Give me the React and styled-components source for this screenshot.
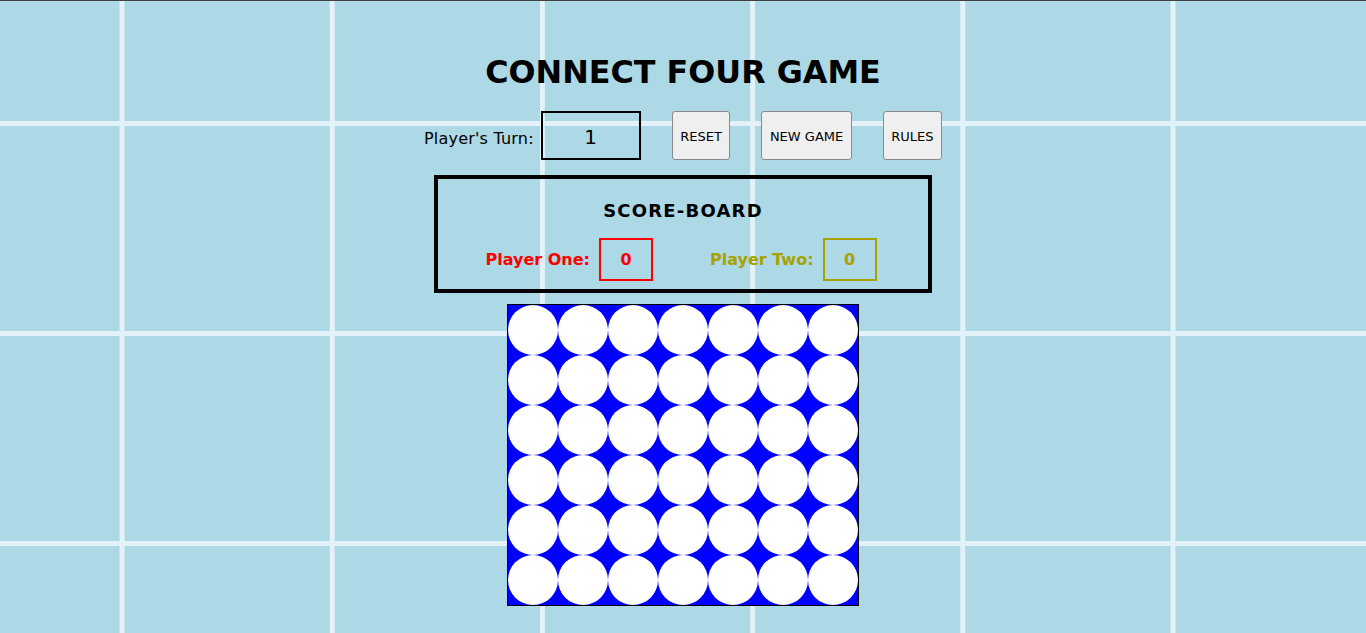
import React, { useState } from "react";
import styled, { createGlobalStyle } from "styled-components";

const GlobalStyle = createGlobalStyle`
  html, body {
    margin: 0;
    padding: 0;
  }
  body {
    font-family: "DejaVu Sans", Verdana, sans-serif;
  }
`;

const Page = styled.div`
  box-sizing: border-box;
  min-height: 100vh;
  border-top: 1px solid #404040;
  background-color: #add8e6;
  background-image: linear-gradient(
      to right,
      transparent 120px,
      #e3f2f8 120px,
      #e3f2f8 125px,
      transparent 125px
    ),
    linear-gradient(
      to bottom,
      transparent 120px,
      #e3f2f8 120px,
      #e3f2f8 125px,
      transparent 125px
    );
  background-size: 210.2px 100%, 100% 210px;
  display: flex;
  flex-direction: column;
  align-items: center;
  padding-top: 52px;
`;

const Title = styled.h1`
  margin: 0;
  font-size: 31.8px;
  font-weight: bold;
  line-height: 37px;
  color: #000;
`;

const Controls = styled.div`
  display: flex;
  align-items: center;
  margin-top: 21px;
  height: 48px;
`;

const TurnLabel = styled.span`
  font-size: 16px;
  letter-spacing: 0.2px;
  color: #000;
  margin-right: 7px;
  margin-top: 6px;
`;

const TurnBox = styled.div`
  box-sizing: border-box;
  width: 100px;
  height: 49px;
  border: 2px solid #000;
  display: flex;
  align-items: center;
  justify-content: center;
  font-size: 20px;
  padding-top: 3px;
`;

const Button = styled.button`
  box-sizing: border-box;
  height: 49px;
  margin-left: 31px;
  padding: 2px 7.5px 0;
  font-family: "DejaVu Sans", Verdana, sans-serif;
  font-size: 13px;
  color: #000;
  background: #efefef;
  border: 1px solid #8a8a8a;
  border-radius: 3px;
  cursor: pointer;
`;

const ScoreBoard = styled.div`
  box-sizing: border-box;
  width: 498px;
  height: 118px;
  margin-top: 16px;
  border: 4px solid #000;
  display: flex;
  flex-direction: column;
  align-items: center;
`;

const ScoreTitle = styled.h2`
  margin: 21px 0 0;
  font-size: 18px;
  line-height: 21px;
  letter-spacing: 1.2px;
  font-weight: bold;
`;

const ScoreRow = styled.div`
  display: flex;
  align-items: center;
  margin-top: 17px;
  margin-right: 4px;
  gap: 57px;
`;

const PlayerScore = styled.div`
  display: flex;
  align-items: center;
  gap: 9px;
  color: ${(p) => p.$color};
  font-size: 16px;
  font-weight: bold;
`;

const ScoreBox = styled.div`
  box-sizing: border-box;
  width: 54px;
  height: 43px;
  border: 2px solid ${(p) => p.$color};
  display: flex;
  align-items: center;
  justify-content: center;
`;

const Board = styled.div`
  margin-top: 11px;
  display: grid;
  grid-template-columns: repeat(7, 50px);
  grid-template-rows: repeat(6, 50px);
  background: #0000ff;
  border: 1px solid #000;
`;

const Cell = styled.div`
  width: 50px;
  height: 50px;
  border-radius: 50%;
  background: ${(p) => p.$fill};
`;

const colors = { 0: "#ffffff", 1: "#ff0000", 2: "#ffff00" };

export default function App() {
  const [grid] = useState(() =>
    Array.from({ length: 6 }, () => Array(7).fill(0))
  );

  return (
    <>
      <GlobalStyle />
      <Page>
        <Title>CONNECT FOUR GAME</Title>
        <Controls>
          <TurnLabel>Player's Turn:</TurnLabel>
          <TurnBox>1</TurnBox>
          <Button>RESET</Button>
          <Button>NEW GAME</Button>
          <Button>RULES</Button>
        </Controls>
        <ScoreBoard>
          <ScoreTitle>SCORE-BOARD</ScoreTitle>
          <ScoreRow>
            <PlayerScore $color="#ff0000">
              Player One:
              <ScoreBox $color="#ff0000">0</ScoreBox>
            </PlayerScore>
            <PlayerScore $color="#a8a200">
              Player Two:
              <ScoreBox $color="#a8a200">0</ScoreBox>
            </PlayerScore>
          </ScoreRow>
        </ScoreBoard>
        <Board>
          {grid.map((row, r) =>
            row.map((v, c) => <Cell key={`${r}-${c}`} $fill={colors[v]} />)
          )}
        </Board>
      </Page>
    </>
  );
}
